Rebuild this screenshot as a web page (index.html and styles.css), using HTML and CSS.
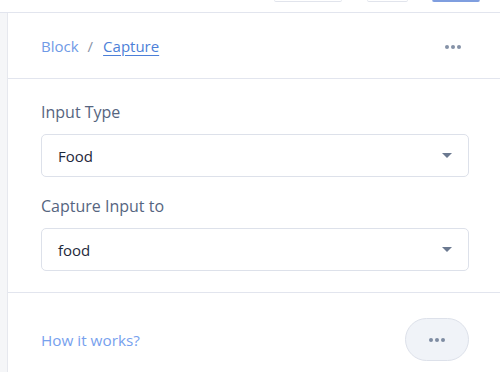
FILE: index.html
```html
<!DOCTYPE html>
<html>
<head>
<meta charset="utf-8">
<link rel="stylesheet" href="styles.css">
</head>
<body>
<div class="toolbar">
  <span class="tb-btn tb-a"></span>
  <span class="tb-btn tb-b"></span>
  <span class="tb-btn tb-c"></span>
</div>
<div class="main">
  <div class="rail"></div>
  <div class="panel">
    <div class="header">
      <div class="crumbs">
        <span class="crumb">Block</span>
        <span class="sep">/</span>
        <a class="crumb-link">Capture</a>
      </div>
      <span class="dots"><i></i><i></i><i></i></span>
    </div>
    <div class="form">
      <div class="label">Input Type</div>
      <div class="select"><span>Food</span><span class="caret"></span></div>
      <div class="label second">Capture Input to</div>
      <div class="select"><span>food</span><span class="caret"></span></div>
    </div>
    <div class="footer">
      <a class="help">How it works?</a>
      <span class="pill"><span class="dots"><i></i><i></i><i></i></span></span>
    </div>
  </div>
</div>
</body>
</html>
```

FILE: styles.css
```css
* { box-sizing: border-box; }
html, body { margin: 0; padding: 0; background: #fff; }
body {
  font-family: "Open Sans", "Noto Sans", sans-serif;
  width: 500px;
  height: 372px;
  overflow: hidden;
}
.toolbar {
  height: 13px;
  border-bottom: 1px solid #e2e5ee;
  display: flex;
  align-items: flex-start;
  overflow: hidden;
}
.tb-btn {
  display: block;
  height: 2px;
  border-bottom: 1px solid #e1e4ec;
  border-left: 1px solid #e8eaf0;
  border-right: 1px solid #e8eaf0;
  border-radius: 0 0 4px 4px;
}
.tb-a { margin-left: 274px; width: 68px; }
.tb-b { margin-left: 25px; width: 41px; }
.tb-c { margin-left: 24px; width: 48px; border-color: #8aa5e0; border-bottom: 2px solid #7f9edf; }
.main {
  display: flex;
  height: 359px;
}
.rail {
  width: 8px;
  background: #f5f6f8;
  border-right: 1px solid #e6e8ee;
}
.panel {
  flex: 1;
  display: flex;
  flex-direction: column;
}
.header {
  height: 66px;
  display: flex;
  align-items: center;
  justify-content: space-between;
  padding: 0 39px 0 33px;
  border-bottom: 1px solid #e2e5ee;
}
.crumbs {
  font-size: 15px;
  display: flex;
  align-items: center;
}
.crumb { color: #6f9ae6; }
.sep { color: #8a94a6; margin: 0 10px 0 9px; }
.crumb-link { color: #4c7fd8; text-decoration: underline; text-underline-offset: 3px; }
.dots { display: flex; gap: 2px; }
.dots i {
  display: block;
  width: 4px;
  height: 4px;
  border-radius: 50%;
  background: #8592a7;
}
.header .dots { margin-top: 3px; }
.form {
  padding: 22px 31px 21px 33px;
  border-bottom: 1px solid #e2e5ee;
}
.label {
  font-size: 16px;
  line-height: 22px;
  color: #56657f;
  margin-bottom: 11px;
}
.label.second { margin-top: 18px; }
.select {
  height: 43px;
  border: 1px solid #dde1ea;
  border-radius: 5px;
  display: flex;
  align-items: center;
  justify-content: space-between;
  padding: 0 16px;
  font-size: 15px;
  color: #1e293b;
}
.caret {
  width: 0;
  height: 0;
  border-left: 5px solid transparent;
  border-right: 5px solid transparent;
  border-top: 5px solid #6b7990;
  margin-top: -1px;
}
.footer {
  flex: 1;
  display: flex;
  align-items: center;
  justify-content: space-between;
  padding: 14px 31px 0 33px;
}
.help { font-size: 15.3px; color: #77a1ee; }
.pill {
  width: 64px;
  height: 43px;
  border-radius: 22px;
  background: #f0f3f8;
  border: 1px solid #dde1ea;
  display: flex;
  align-items: center;
  justify-content: center;
}
.pill .dots i { background: #7e8ca2; }
```
